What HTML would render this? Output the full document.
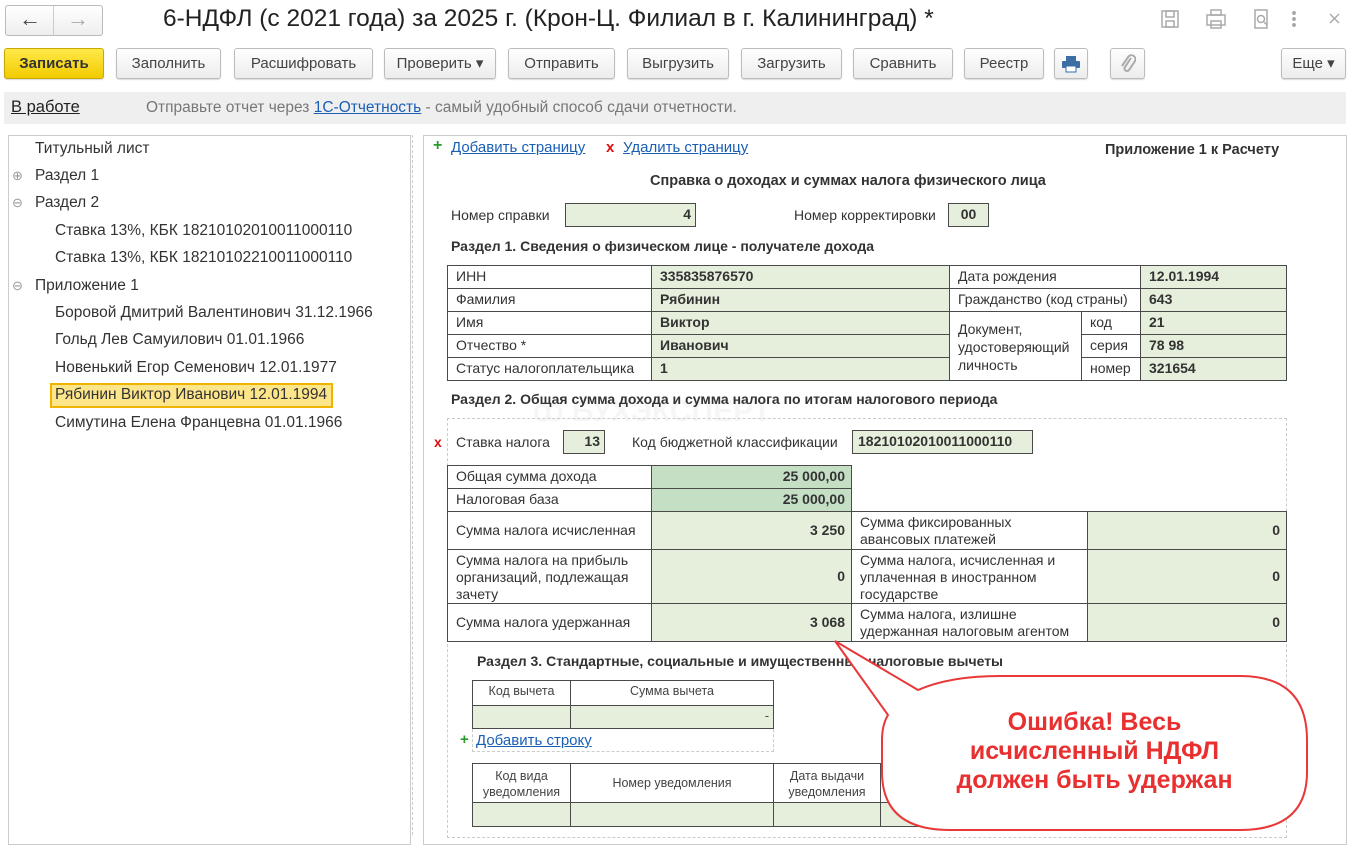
<!DOCTYPE html>
<html><head><meta charset="utf-8"><style>
*{box-sizing:border-box;margin:0;padding:0}
body{width:1350px;height:835px;overflow:hidden;background:#fff;font-family:"Liberation Sans",Arial,sans-serif;position:relative;color:#333}
.a{position:absolute}
.btn{position:absolute;top:48px;height:31px;border:1px solid #bcbcbc;border-radius:3px;background:linear-gradient(#fff,#ececec);font-size:15px;color:#444;text-align:center;line-height:29px;box-shadow:0 1px 1px rgba(0,0,0,.15)}
.t{position:absolute;font-size:15.5px;color:#333;white-space:nowrap}
.c{position:absolute;border:1px solid #4a4a4a;font-size:14px;color:#333;padding-left:8px;line-height:21px;overflow:hidden;background:#fff}
.g{background:#e6efdc}
.dg{background:#c5dfc5}
.b{font-weight:bold;color:#333}
.r{text-align:right;padding-right:6px;font-weight:bold}
.h{font-size:14px;font-weight:bold;color:#333}
a,.lnk{color:#1a5fb4;text-decoration:underline}
.sm{font-size:12.5px;text-align:center;padding:0;color:#444}
</style></head><body>
<div class="a" style="left:5px;top:5px;width:98px;height:31px;border:1px solid #bbb;border-radius:3px;background:linear-gradient(#fff,#eee)"></div>
<div class="a" style="left:53px;top:6px;width:1px;height:29px;background:#ccc"></div>
<div class="t" style="left:19px;top:6px;font-size:22px;color:#444;font-weight:bold">&#8592;</div>
<div class="t" style="left:67px;top:6px;font-size:22px;color:#aaa;font-weight:bold">&#8594;</div>
<div class="t" style="left:163px;top:5px;font-size:24.5px;color:#222">6-НДФЛ (с 2021 года) за 2025 г. (Крон-Ц. Филиал в г. Калининград) *</div>
<svg class="a" style="left:1158px;top:8px" width="190" height="24" fill="none" stroke="#aaa" stroke-width="1.5">
<rect x="4" y="3" width="16" height="16"/><rect x="8" y="3" width="8" height="6"/><rect x="8" y="13" width="8" height="6"/>
<rect x="49" y="7" width="18" height="10"/><rect x="53" y="2" width="10" height="5"/><rect x="53" y="13" width="10" height="7"/>
<path d="M97 2h12v18h-12z"/><circle cx="103" cy="11" r="3.5"/><path d="M106 14l3 3"/>
<circle cx="136" cy="5" r="1.2" fill="#999"/><circle cx="136" cy="11" r="1.2" fill="#999"/><circle cx="136" cy="17" r="1.2" fill="#999"/>
<path d="M172 6l9 9M181 6l-9 9"/>
</svg>
<div class="btn" style="left:4px;width:100px;background:linear-gradient(#ffe94a,#f2cc00);border-color:#c9a800;font-weight:bold;color:#333">Записать</div>
<div class="btn" style="left:116px;width:105px">Заполнить</div>
<div class="btn" style="left:234px;width:139px">Расшифровать</div>
<div class="btn" style="left:384px;width:112px">Проверить ▾</div>
<div class="btn" style="left:508px;width:107px">Отправить</div>
<div class="btn" style="left:627px;width:102px">Выгрузить</div>
<div class="btn" style="left:741px;width:101px">Загрузить</div>
<div class="btn" style="left:853px;width:100px">Сравнить</div>
<div class="btn" style="left:964px;width:80px">Реестр</div>
<div class="btn" style="left:1054px;width:34px"><svg width="20" height="18" style="margin-top:6px"><rect x="5" y="1" width="10" height="5" fill="#3a6ea5"/><rect x="1" y="6" width="18" height="7" rx="1" fill="#3a6ea5"/><rect x="5" y="11" width="10" height="6" fill="#fff" stroke="#3a6ea5"/></svg></div>
<div class="btn" style="left:1110px;width:35px"><svg width="16" height="20" style="margin-top:5px" fill="none" stroke="#aaa" stroke-width="2"><path d="M11 4L5 13a2.5 2.5 0 0 0 4 3l6-9a4 4 0 0 0-6.5-4.5L2 12"/></svg></div>
<div class="btn" style="left:1281px;width:65px">Еще ▾</div>
<div class="a" style="left:4px;top:92px;width:1342px;height:32px;background:#efefef"></div>
<div class="t" style="left:11px;top:98px;font-size:16.5px;color:#222;text-decoration:underline">В работе</div>
<div class="t" style="left:146px;top:99px;font-size:15.5px;color:#777">Отправьте отчет через <span class="lnk">1С-Отчетность</span> - самый удобный способ сдачи отчетности.</div>
<div class="a" style="left:8px;top:135px;width:403px;height:710px;border:1px solid #ccc"></div>
<div class="a" style="left:412px;top:135px;width:1px;height:700px;border-left:1px dashed #ccc"></div>
<div class="a" style="left:50px;top:383px;width:283px;height:25px;background:#fde58a;border:2px solid #f0b400"></div>
<div class="t" style="left:35px;top:140px">Титульный лист</div>
<div class="t" style="left:12px;top:168px;color:#999;font-size:13px">⊕</div><div class="t" style="left:35px;top:167px">Раздел 1</div>
<div class="t" style="left:12px;top:195px;color:#999;font-size:13px">⊖</div><div class="t" style="left:35px;top:194px">Раздел 2</div>
<div class="t" style="left:55px;top:222px">Ставка 13%, КБК 18210102010011000110</div>
<div class="t" style="left:55px;top:249px">Ставка 13%, КБК 18210102210011000110</div>
<div class="t" style="left:12px;top:278px;color:#999;font-size:13px">⊖</div><div class="t" style="left:35px;top:277px">Приложение 1</div>
<div class="t" style="left:55px;top:304px">Боровой Дмитрий Валентинович 31.12.1966</div>
<div class="t" style="left:55px;top:331px">Гольд Лев Самуилович 01.01.1966</div>
<div class="t" style="left:55px;top:359px">Новенький Егор Семенович 12.01.1977</div>
<div class="t" style="left:55px;top:386px">Рябинин Виктор Иванович 12.01.1994</div>
<div class="t" style="left:55px;top:414px">Симутина Елена Францевна 01.01.1966</div>
<div class="a" style="left:423px;top:135px;width:924px;height:710px;border:1px solid #ccc"></div>
<div class="t" style="left:433px;top:137px;color:#2a9a2a;font-weight:bold;font-size:16px">+</div>
<div class="t" style="left:451px;top:139px;font-size:15px"><span class="lnk">Добавить страницу</span></div>
<div class="t" style="left:606px;top:139px;color:#e01010;font-weight:bold;font-size:15px">x</div>
<div class="t" style="left:623px;top:139px;font-size:15px"><span class="lnk">Удалить страницу</span></div>
<div class="t h" style="left:1105px;top:142px;font-size:14.5px">Приложение 1 к Расчету</div>
<div class="t h" style="left:650px;top:173px;font-size:14.5px">Справка о доходах и суммах налога физического лица</div>
<div class="t" style="left:451px;top:207px;font-size:14px">Номер справки</div>
<div class="c g r" style="left:565px;top:203px;width:131px;height:24px;padding-right:4px">4</div>
<div class="t" style="left:794px;top:207px;font-size:14px">Номер корректировки</div>
<div class="c g b" style="left:948px;top:203px;width:41px;height:24px;text-align:center;padding:0">00</div>
<div class="t h" style="left:451px;top:238px">Раздел 1. Сведения о физическом лице - получателе дохода</div>
<div class="c" style="left:447px;top:265px;width:205px;height:24px">ИНН</div>
<div class="c" style="left:447px;top:288px;width:205px;height:24px">Фамилия</div>
<div class="c" style="left:447px;top:311px;width:205px;height:24px">Имя</div>
<div class="c" style="left:447px;top:334px;width:205px;height:24px">Отчество *</div>
<div class="c" style="left:447px;top:357px;width:205px;height:24px">Статус налогоплательщика</div>
<div class="c g b" style="left:651px;top:265px;width:299px;height:24px">335835876570</div>
<div class="c g b" style="left:651px;top:288px;width:299px;height:24px">Рябинин</div>
<div class="c g b" style="left:651px;top:311px;width:299px;height:24px">Виктор</div>
<div class="c g b" style="left:651px;top:334px;width:299px;height:24px">Иванович</div>
<div class="c g b" style="left:651px;top:357px;width:299px;height:24px">1</div>
<div class="c" style="left:949px;top:265px;width:192px;height:24px">Дата рождения</div>
<div class="c" style="left:949px;top:288px;width:192px;height:24px">Гражданство (код страны)</div>
<div class="c" style="left:949px;top:311px;width:133px;height:70px;line-height:18px;padding-top:8px">Документ,<br>удостоверяющий<br>личность</div>
<div class="c" style="left:1081px;top:311px;width:60px;height:24px">код</div>
<div class="c" style="left:1081px;top:334px;width:60px;height:24px">серия</div>
<div class="c" style="left:1081px;top:357px;width:60px;height:24px">номер</div>
<div class="c g b" style="left:1140px;top:265px;width:147px;height:24px">12.01.1994</div>
<div class="c g b" style="left:1140px;top:288px;width:147px;height:24px">643</div>
<div class="c g b" style="left:1140px;top:311px;width:147px;height:24px">21</div>
<div class="c g b" style="left:1140px;top:334px;width:147px;height:24px">78 98</div>
<div class="c g b" style="left:1140px;top:357px;width:147px;height:24px">321654</div>
<div class="t" style="left:533px;top:394px;font-size:30px;font-weight:bold;color:rgba(0,0,0,.035)">ꝏ БУХЭКСПЕРТ</div>
<div class="t h" style="left:451px;top:391px">Раздел 2. Общая сумма дохода и сумма налога по итогам налогового периода</div>
<div class="a" style="left:447px;top:418px;width:840px;height:420px;border:1px dashed #ccc"></div>
<div class="t" style="left:434px;top:434px;color:#e01010;font-weight:bold;font-size:14px">x</div>
<div class="t" style="left:456px;top:434px;font-size:14px">Ставка налога</div>
<div class="c g r" style="left:563px;top:430px;width:42px;height:24px;padding-right:4px">13</div>
<div class="t" style="left:632px;top:434px;font-size:14px">Код бюджетной классификации</div>
<div class="c g b" style="left:852px;top:430px;width:181px;height:24px;padding-left:5px">18210102010011000110</div>
<div class="c" style="left:447px;top:465px;width:205px;height:24px">Общая сумма дохода</div>
<div class="c" style="left:447px;top:488px;width:205px;height:24px">Налоговая база</div>
<div class="c" style="left:447px;top:511px;width:205px;height:39px;line-height:37px">Сумма налога исчисленная</div>
<div class="c" style="left:447px;top:549px;width:205px;height:55px;line-height:17px;padding-top:2px">Сумма налога на прибыль организаций, подлежащая зачету</div>
<div class="c" style="left:447px;top:603px;width:205px;height:39px;line-height:37px">Сумма налога удержанная</div>
<div class="c dg r" style="left:651px;top:465px;width:201px;height:24px">25 000,00</div>
<div class="c dg r" style="left:651px;top:488px;width:201px;height:24px">25 000,00</div>
<div class="c g r" style="left:651px;top:511px;width:201px;height:39px;line-height:37px">3 250</div>
<div class="c g r" style="left:651px;top:549px;width:201px;height:55px;line-height:53px">0</div>
<div class="c g r" style="left:651px;top:603px;width:201px;height:39px;line-height:37px">3 068</div>
<div class="c" style="left:851px;top:511px;width:237px;height:39px;line-height:17px;padding-top:2px">Сумма фиксированных<br>авансовых платежей</div>
<div class="c" style="left:851px;top:549px;width:237px;height:55px;line-height:17px;padding-top:2px">Сумма налога, исчисленная и уплаченная в иностранном государстве</div>
<div class="c" style="left:851px;top:603px;width:237px;height:39px;line-height:17px;padding-top:2px">Сумма налога, излишне удержанная налоговым агентом</div>
<div class="c g r" style="left:1087px;top:511px;width:200px;height:39px;line-height:37px">0</div>
<div class="c g r" style="left:1087px;top:549px;width:200px;height:55px;line-height:53px">0</div>
<div class="c g r" style="left:1087px;top:603px;width:200px;height:39px;line-height:37px">0</div>
<div class="t h" style="left:477px;top:653px">Раздел 3. Стандартные, социальные и имущественные налоговые вычеты</div>
<div class="a" style="left:472px;top:680px;width:302px;height:72px;border:1px dashed #ccc"></div>
<div class="c sm" style="left:472px;top:680px;width:99px;height:26px">Код вычета</div>
<div class="c sm" style="left:570px;top:680px;width:204px;height:26px">Сумма вычета</div>
<div class="c g" style="left:472px;top:705px;width:99px;height:24px"></div>
<div class="c g sm" style="left:570px;top:705px;width:204px;height:24px;text-align:right;padding-right:4px">-</div>
<div class="t" style="left:460px;top:731px;color:#2a9a2a;font-weight:bold;font-size:15px">+</div>
<div class="t" style="left:476px;top:732px;font-size:15px"><span class="lnk">Добавить строку</span></div>
<div class="c sm" style="left:472px;top:763px;width:99px;height:40px;line-height:16px;padding-top:4px">Код вида уведомления</div>
<div class="c sm" style="left:570px;top:763px;width:204px;height:40px;line-height:38px">Номер уведомления</div>
<div class="c sm" style="left:773px;top:763px;width:108px;height:40px;line-height:16px;padding-top:4px">Дата выдачи уведомления</div>
<div class="c" style="left:880px;top:763px;width:180px;height:40px"></div>
<div class="c g" style="left:472px;top:802px;width:99px;height:25px"></div>
<div class="c g" style="left:570px;top:802px;width:204px;height:25px"></div>
<div class="c g" style="left:773px;top:802px;width:108px;height:25px"></div>
<div class="c g" style="left:880px;top:802px;width:180px;height:25px"></div>
<svg class="a" style="left:0;top:0" width="1350" height="835">
<path d="M835 641 L918 690 Q950 676 1000 676 L1240 676 Q1307 676 1307 740 L1307 772 Q1307 830 1240 830 L950 830 Q882 830 882 772 L882 740 Q882 725 888 715 Z" fill="#fff" stroke="#e83838" stroke-width="2"/>
</svg>
<div class="t" style="left:882px;top:708px;width:425px;text-align:center;color:#e83030;font-weight:bold;font-size:25px;line-height:29px">Ошибка! Весь<br>исчисленный НДФЛ<br>должен быть удержан</div>
</body></html>
